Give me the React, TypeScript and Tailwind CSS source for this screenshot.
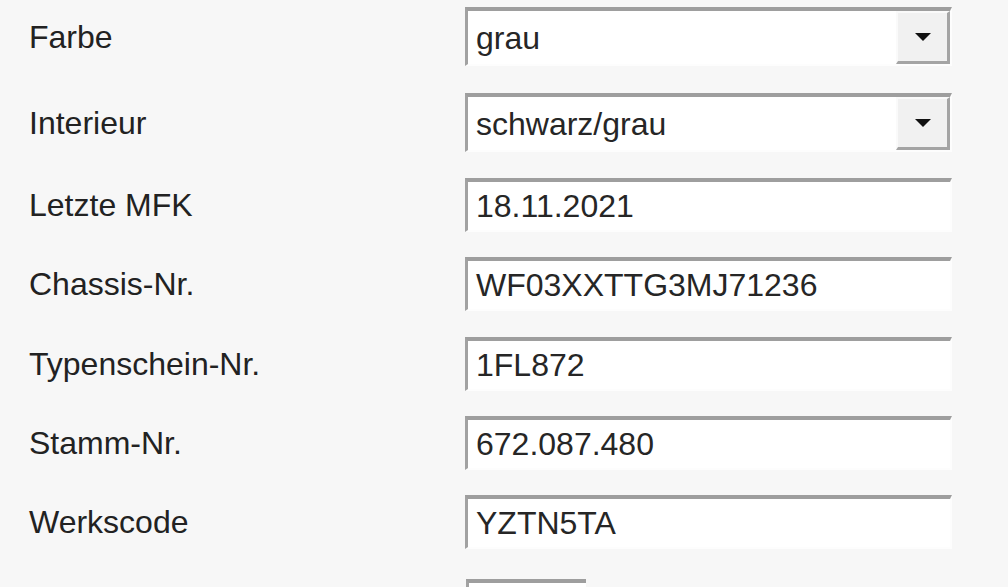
const rows = [
  { label: "Farbe", value: "grau", select: true, mt: "mt-[7px]" },
  { label: "Interieur", value: "schwarz/grau", select: true, mt: "mt-[27px]" },
  { label: "Letzte MFK", value: "18.11.2021", select: false, mt: "mt-[26px]" },
  { label: "Chassis-Nr.", value: "WF03XXTTG3MJ71236", select: false, mt: "mt-[25px]" },
  { label: "Typenschein-Nr.", value: "1FL872", select: false, mt: "mt-[26px]" },
  { label: "Stamm-Nr.", value: "672.087.480", select: false, mt: "mt-[25px]" },
  { label: "Werkscode", value: "YZTN5TA", select: false, mt: "mt-[25px]" },
];

function DropButton() {
  return (
    <div className="flex h-full w-[54px] items-center justify-center border-t-2 border-l-2 border-r-[3px] border-b-[3px] border-t-[#fafafa] border-l-[#fafafa] border-r-[#a4a4a4] border-b-[#a4a4a4] bg-[#f1f1f1]">
      <svg width="18" height="10" viewBox="0 0 18 10">
        <path d="M1 1 H17 L9 9 Z" fill="#111" />
      </svg>
    </div>
  );
}

function Field({ value, select }: { value: string; select: boolean }) {
  return (
    <div
      className={`flex w-[487px] items-center border-t-4 border-l-[3px] border-r-2 border-b-2 border-t-[#9e9e9e] border-l-[#a2a2a2] border-r-[#fdfdfd] border-b-[#fdfdfd] bg-white ${
        select ? "h-[59px]" : "h-[54px]"
      }`}
    >
      <span className="flex-1 pl-[8px] text-[#262626]">{value}</span>
      {select && <DropButton />}
    </div>
  );
}

export default function App() {
  return (
    <div
      className="h-[587px] w-[1008px] overflow-hidden bg-[#f7f7f7] text-[32px] leading-none"
      style={{ fontFamily: '"Liberation Sans", Arial, sans-serif' }}
    >
      {rows.map((r) => (
        <div key={r.label} className={`flex items-center ${r.mt}`}>
          <div className="w-[465px] pl-[29px] text-[#222]">{r.label}</div>
          <Field value={r.value} select={r.select} />
        </div>
      ))}
      <div className="mt-[30px] ml-[466px] h-[40px] w-[120px] border-t-4 border-l-[3px] border-t-[#9e9e9e] border-l-[#a2a2a2] bg-white" />
    </div>
  );
}
